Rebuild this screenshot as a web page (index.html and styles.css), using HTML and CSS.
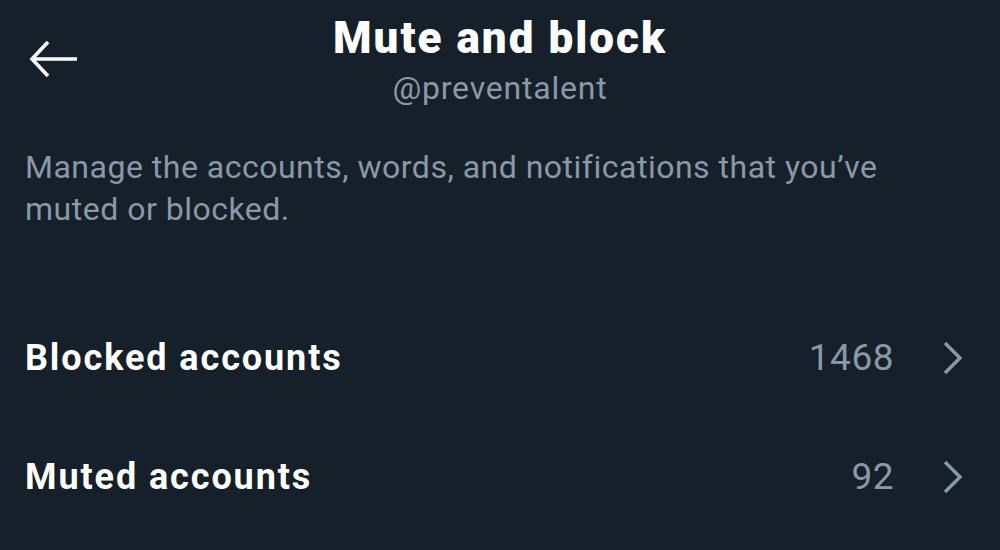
FILE: index.html
```html
<!DOCTYPE html>
<html>
<head>
<meta charset="utf-8">
<link rel="stylesheet" href="styles.css">
</head>
<body>
<div class="screen">
  <header class="header">
    <div class="back">
      <svg width="52" height="40" viewBox="0 0 52 40" fill="none" stroke="#fff" stroke-width="3.6" stroke-linecap="butt" stroke-linejoin="miter">
        <path d="M49 19 H6"/>
        <path d="M20 2 L4 19 L20 36"/>
      </svg>
    </div>
    <div class="titles">
      <h1 class="title">Mute and block</h1>
      <div class="handle">@preventalent</div>
    </div>
    <div></div>
  </header>
  <p class="desc">Manage the accounts, words, and notifications that you’ve muted or blocked.</p>
  <div class="list">
    <div class="row">
      <span class="label">Blocked accounts</span>
      <span class="count">1468</span>
      <svg class="chev" width="22" height="34" viewBox="0 0 22 34" fill="none" stroke="#8b98a5" stroke-width="3.4"><path d="M3 2 L18 17 L3 32"/></svg>
    </div>
    <div class="row">
      <span class="label">Muted accounts</span>
      <span class="count">92</span>
      <svg class="chev" width="22" height="34" viewBox="0 0 22 34" fill="none" stroke="#8b98a5" stroke-width="3.4"><path d="M3 2 L18 17 L3 32"/></svg>
    </div>
  </div>
</div>
</body>
</html>
```
FILE: styles.css
```css
html, body {
  margin: 0;
  padding: 0;
  background: #15202b;
}
body {
  font-family: Roboto, "Liberation Sans", sans-serif;
  color: #fff;
  width: 1000px;
  height: 550px;
  overflow: hidden;
}
.screen {
  display: flex;
  flex-direction: column;
}
.header {
  display: grid;
  grid-template-columns: 1fr auto 1fr;
  align-items: start;
  padding-top: 11px;
}
.back {
  padding-left: 28px;
  padding-top: 29px;
  display: flex;
}
.titles {
  display: flex;
  flex-direction: column;
  align-items: center;
}
.title {
  margin: 0;
  font-size: 44px;
  font-weight: 900;
  line-height: 54px;
  letter-spacing: 2px;
}
.handle {
  margin-top: 4px;
  font-size: 32px;
  line-height: 38px;
  color: #8b98a5;
  letter-spacing: 0.8px;
}
.desc {
  margin: 39px 0 0;
  padding: 0 25px;
  width: 870px;
  font-size: 32px;
  line-height: 42px;
  color: #8b98a5;
  letter-spacing: 0.5px;
}
.list {
  margin-top: 68px;
  display: flex;
  flex-direction: column;
}
.row {
  height: 119px;
  display: flex;
  align-items: center;
  padding: 0 36px 0 25px;
}
.label {
  flex: 1;
  font-size: 36px;
  font-weight: 700;
  letter-spacing: 1.9px;
}
.count {
  font-size: 37px;
  color: #8b98a5;
  letter-spacing: 0.5px;
  margin-right: 48px;
}
.chev {
  display: block;
}
```
